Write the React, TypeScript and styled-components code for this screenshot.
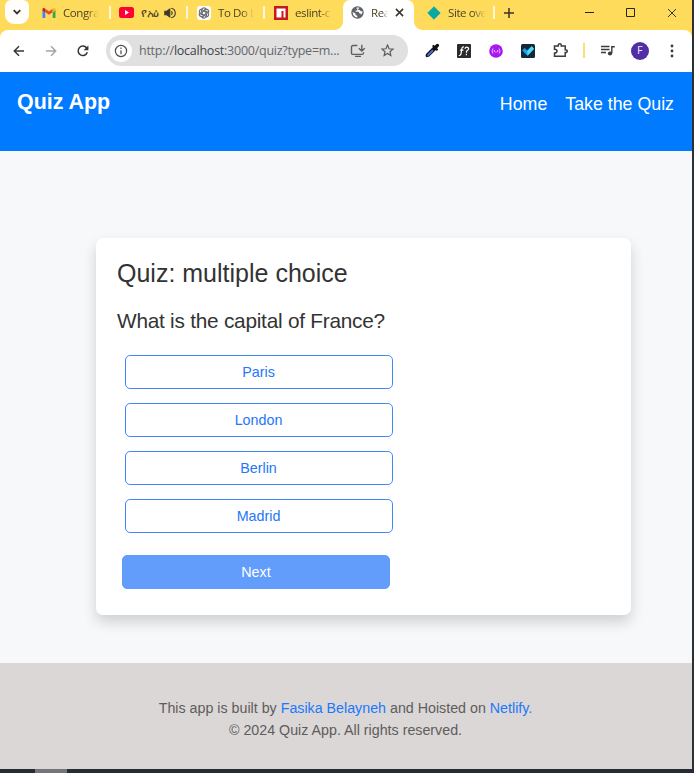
import React from "react";
import styled, { createGlobalStyle } from "styled-components";

const GlobalStyle = createGlobalStyle`
  * { box-sizing: border-box; }
  body { margin: 0; background: #303338; font-family: "Liberation Sans", Arial, sans-serif; }
  button { font-family: inherit; cursor: pointer; }
  a { text-decoration: none; }
  svg { display: block; flex: none; }
`;

const Desktop = styled.div`
  width: 694px;
  height: 773px;
  overflow: hidden;
  background: #2c3035;
`;
const Window = styled.div`
  width: 692px;
  height: 769px;
  display: flex;
  flex-direction: column;
  background: #ffdb5c;
`;
const TabStrip = styled.div`
  height: 30px;
  flex: none;
  display: flex;
  font-family: "Open Sans", "Noto Sans", sans-serif;
  font-size: 11.5px;
  letter-spacing: -0.4px;
  color: #4b4326;
`;
const TabSearch = styled.button`
  width: 24px;
  height: 24px;
  margin: 0 5px;
  padding: 0;
  border: 0;
  border-radius: 6px 6px 9px 9px;
  background: #fffefa;
  display: grid;
  place-items: center;
`;
const Tab = styled.div<{ $width: number; $active?: boolean; $divided?: boolean; $inset?: number }>`
  position: relative;
  width: ${(p) => p.$width}px;
  height: ${(p) => (p.$active ? 30 : 25)}px;
  padding: 0 0 ${(p) => (p.$active ? 5 : 0)}px ${(p) => p.$inset ?? 8}px;
  display: flex;
  align-items: center;
  gap: 7px;
  flex: none;
  ${(p) => p.$active && "background: #fff; border-radius: 7px 7px 0 0;"}
  ${(p) =>
    p.$divided &&
    `&::after { content: ""; position: absolute; right: 0; top: 6px; width: 2px; height: 13px; background: #fff6d8; }`}
`;
const Flare = styled.i<{ $side: "left" | "right" }>`
  position: absolute;
  bottom: 0;
  ${(p) => p.$side}: -8px;
  width: 8px;
  height: 8px;
  background: radial-gradient(circle at ${(p) => p.$side} top, transparent 7.5px, #fff 8px);
`;
const TabTitle = styled.span<{ $width: number; $faded?: boolean }>`
  width: ${(p) => p.$width}px;
  height: 18px;
  line-height: 18px;
  white-space: nowrap;
  ${(p) => p.$faded && "mask-image: linear-gradient(90deg, #000 65%, transparent);"}
`;
const WindowControls = styled.div`
  margin-left: auto;
  display: flex;
`;
const Slot = styled.button<{ $width: number; $height?: number }>`
  width: ${(p) => p.$width}px;
  height: ${(p) => p.$height ?? 41}px;
  flex: none;
  padding: 0;
  border: 0;
  background: none;
  display: grid;
  place-items: center;
`;
const Toolbar = styled.div`
  height: 41.5px;
  flex: none;
  display: flex;
  align-items: center;
  background: #fff;
  border-radius: 8px 8px 0 0;
  padding-left: 3px;
`;
const AddressBar = styled.div`
  width: 302px;
  height: 31px;
  margin: 0 8px 0 7px;
  flex: none;
  border-radius: 16px;
  background: #e0e0e0;
  display: flex;
  align-items: center;
  padding-left: 4px;
`;
const SiteInfo = styled.span`
  width: 22px;
  height: 22px;
  border-radius: 50%;
  background: #fff;
  display: grid;
  place-items: center;
`;
const Url = styled.span`
  width: 203px;
  margin-left: 7px;
  white-space: nowrap;
  font: 12.5px "Open Sans", "Noto Sans", sans-serif;
  letter-spacing: -0.25px;
  color: #66676a;
  b { font-weight: 400; color: #414347; }
`;
const ThemeMark = styled.span`
  width: 2px;
  height: 15px;
  margin: 0 7px;
  background: #ffdb70;
`;
const Avatar = styled.span`
  width: 18px;
  height: 18px;
  border-radius: 50%;
  background: #512da8;
  color: #eee4ff;
  font: 10px/18px Roboto, sans-serif;
  text-align: center;
`;
const SiteHeader = styled.header`
  height: 79.5px;
  flex: none;
  display: flex;
  justify-content: space-between;
  align-items: flex-start;
  padding: 17px 18px 0 17px;
  background: #007bff;
  color: #fff;
`;
const Brand = styled.div`
  font-size: 21.4px;
  line-height: 27px;
  font-weight: 700;
`;
const Nav = styled.nav`
  display: flex;
  gap: 18px;
  padding-top: 3px;
  font-size: 17.8px;
  line-height: 25px;
  a { color: #fff; }
`;
const Main = styled.main`
  height: 511.5px;
  flex: none;
  background: #f7f8fa;
  padding: 86.5px 0 0 96px;
`;
const Card = styled.section`
  width: 535px;
  height: 377px;
  padding: 19px 21px;
  border-radius: 7px;
  background: #fff;
  color: #333;
  box-shadow: 0 7px 14px rgba(0, 0, 0, 0.16);
`;
const Heading = styled.h2`
  margin: 0;
  font-size: 25px;
  line-height: 32px;
  font-weight: 400;
`;
const Question = styled.h3`
  margin: 18px 0 21px;
  font-size: 20.8px;
  letter-spacing: -0.24px;
  line-height: 27px;
  font-weight: 400;
`;
const Options = styled.div`
  display: grid;
  gap: 14.3px;
  padding-left: 7.5px;
`;
const Button = styled.button<{ $primary?: boolean }>`
  display: block;
  width: 268px;
  height: 34px;
  padding: 0;
  border: 1px solid ${(p) => (p.$primary ? "#629dfc" : "#4288fb")};
  border-radius: 5px;
  background: ${(p) => (p.$primary ? "#629dfc" : "#fff")};
  color: ${(p) => (p.$primary ? "#fff" : "#2477fa")};
  font-size: 14.3px;
  margin: ${(p) => (p.$primary ? "21.2px 0 0 5px" : "0")};
`;
const Footer = styled.footer`
  flex: 1;
  background: #dbd7d6;
  padding: 34px 1px 0 0;
  text-align: center;
  font-size: 14.25px;
  line-height: 22px;
  color: #5e5c5c;
  p { margin: 0; }
  a { color: #1c78fc; }
`;
const Taskbar = styled.div`
  height: 4px;
  padding-left: 35px;
  background: #262b34;
`;
const TaskbarItem = styled.div`
  width: 32px;
  height: 4px;
  background: #747779;
`;

const stroke = { fill: "none", stroke: "currentColor", strokeWidth: 1.5 } as const;

const Chevron = () => <svg width="10" height="8" {...stroke} color="#333" strokeWidth="1.8"><path d="m1.7 2.2 3.3 3.2 3.3-3.2" /></svg>;
const GmailIcon = () => (
  <svg width="14" height="12" viewBox="0 0 14 12">
    <path fill="#4285f4" d="M1 11h2.3V5L.5 3v7.2q0 .8.5.8" />
    <path fill="#34a853" d="M10.7 11H13q.5 0 .5-.8V3l-2.8 2z" />
    <path fill="#ea4335" d="M3.3 5V1.8L7 4.6l3.7-2.8V5L7 7.8z" />
    <path fill="#c5221f" d="M.5 2.4v1l2.8 2.1V1.8Q.7 0 .5 2.4" />
    <path fill="#fbbc04" d="M10.7 1.8v3.7l2.8-2.1v-1Q13.3 0 10.7 1.8" />
  </svg>
);
const YouTubeIcon = () => <svg width="15" height="11"><rect width="15" height="11" rx="2.5" fill="#ff0033" /><path fill="#fff" d="m6 3 4 2.5L6 8z" /></svg>;
const SpeakerIcon = () => <svg width="12" height="12" viewBox="0 0 12 12" fill="none" stroke="#3f3929" strokeWidth="1.1"><path fill="#3f3929" d="M.8 4.3h2L5.8 2v8L2.8 7.7h-2z" /><path d="M7.5 4.2q1.4 1.8 0 3.6M7.3 1.2c5.3 1.3 5.3 8.3 0 9.6" /></svg>;
const KnotIcon = () => (
  <svg width="14" height="14" viewBox="0 0 14 14">
    <rect width="14" height="14" rx="3" fill="#fff" />
    <g fill="none" stroke="#6d7073" strokeWidth="1.2">
      {[0, 60, 120, 180, 240, 300].map((a) => <path key={a} transform={`rotate(${a} 7 7)`} d="M5 7V3.8Q5.4 1.8 7.2 1.9q1 0 1.8 1L6.5 4.4" />)}
      <path d="m7 4.9 1.9 1.1v2.1L7 9.2 5.1 8.1V6z" />
    </g>
  </svg>
);
const NpmIcon = () => <svg width="14" height="14"><path fill="#cb171e" d="M0 0h14v14H0z" /><path fill="#fff" d="M2.5 2.5h9v9H9.5V5h-2v6.5h-5z" /></svg>;
const GlobeIcon = () => <svg width="13" height="13" viewBox="0 0 13 13"><circle cx="6.5" cy="6.5" r="6.2" fill="#606367" /><path fill="#fff" d="M1.6 6.1 4.5 7.4v1.5l1.8.9v1.7Q1.8 11 1.6 6.1m3-4.1q1.6-.8 3.8-.4L7.5 3H6.2v1.5H4.6v1.3h3l1 1.6h1.2V9q2-1.5 1.7-3.8H9.7L8.8 4.1H7.2V3" /></svg>;
const CloseIcon = ({ size = 9 }: { size?: number }) => <svg width={size} height={size} viewBox="0 0 10 10" fill="none" stroke="#38352d" strokeWidth={size > 9 ? 1 : 1.7}><path d="m1 1 8 8m0-8L1 9" /></svg>;
const DiamondIcon = () => <svg width="14" height="14"><path fill="#08a9a5" stroke="#08a9a5" strokeLinejoin="round" d="m7 .8 6.2 6.2L7 13.2.8 7z" /></svg>;
const PlusIcon = () => <svg width="10" height="10" {...stroke} color="#38352d"><path d="M5 0v10M0 5h10" /></svg>;
const MinIcon = () => <svg width="10" height="10" fill="none" stroke="#272418"><path d="M0 4.5h9" /></svg>;
const MaxIcon = () => <svg width="10" height="10" fill="none" stroke="#272418"><path d="M.5.5h8v8h-8z" /></svg>;
const ArrowIcon = ({ forward = false }) => <svg width="12" height="12" {...stroke} color={forward ? "#a4a5a6" : "#36383a"}><path d={forward ? "M1 6h9M6 1.3 10.7 6 6 10.7" : "M11 6H2m4-4.7L1.3 6 6 10.7"} /></svg>;
const ReloadIcon = () => <svg width="12" height="12" {...stroke} color="#333537"><path d="M10.3 7.3a4.7 4.7 0 1 1-.7-4.3l1 1.2" /><path fill="currentColor" stroke="none" d="M11.4.4v4.9H6.5l2-2z" /></svg>;
const InfoIcon = () => <svg width="14" height="14" fill="none" stroke="#4b4d50" strokeWidth="1.2"><circle cx="7" cy="7" r="5.6" /><path d="M7 6.2v4M7 3.6v1.3" /></svg>;
const InstallIcon = () => <svg width="16" height="14" fill="none" stroke="#5d6063" strokeWidth="1.4"><path d="M7.3 1.5H3q-1.5 0-1.5 1.5v6.2q0 1.2 1.5 1.2h9q1.5 0 1.5-1.4V8.3M5 12.4h6M11.8.8v6M8.8 4.2l3 2.8 3-2.8" /></svg>;
const StarIcon = () => <svg width="13" height="13" viewBox="0 0 14 14" fill="none" stroke="#595c5e" strokeWidth="1.3"><path d="m7 1.2 1.7 3.9 4.2.4-3.2 2.8.9 4.2L7 10.3l-3.6 2.2.9-4.2L1.1 5.5l4.2-.4z" /></svg>;
const DropperIcon = () => <svg width="15" height="15"><path fill="#101116" d="m1 11 7-7-1-1 1.4-1.3 1.2 1 2-1.8q1-.7 2 .4t.3 2l-1.8 2 1.1 1.2-1.4 1.4-1-1-6.6 6.6-2.7.8L.5 13z" /><path fill="#4d72e8" d="m2.5 11.4 4.8-4.8 1.3 1.3-4.8 4.8-1.5.4z" /></svg>;
const FontIcon = () => <svg width="14" height="14"><rect width="14" height="14" rx="1" fill="#292a2d" /><path d="M1.8 11.4q2 .5 2.3-2l.7-4.5Q5.2 2.5 7 3M3 6.2h3.5m1.4-1.4q.7-2 2.5-1.5 2 .6.8 2.3L9.5 7.2v1.6m-.1 1v1.4" fill="none" stroke="#fff" strokeWidth="1.2" /></svg>;
const PurpleIcon = () => <svg width="14" height="14"><circle cx="7" cy="7" r="6.8" fill="#a719f4" /><path d="M4 4.5Q2 7 4 9.6M10 4.5q2 2.5 0 5.1M5.3 6v2M8.7 6v2M6.3 8h1.4" fill="none" stroke="#e9b7ff" /></svg>;
const CheckIcon = () => <svg width="14" height="14"><rect width="14" height="14" rx="1.5" fill="#142638" /><path d="m1.2 6.5 2.2-2.4 3 2.5 4.3-4.3 2.4 2.4-6.6 7z" fill="#10a7ef" /><path d="m6.4 6.8 4.3-4.5 2.4 2.4-6.6 7z" fill="#4bdcfb" /></svg>;
const PuzzleIcon = () => <svg width="15" height="15" fill="none" stroke="#393b3d" strokeWidth="1.5"><path d="M1.5 3h3.8Q5 .8 6.8.8T8.3 3h3.9v3.8q2 0 2 1.4t-2 1.4v3.6H1.5v-3.1q2.5-.2 2.5-1.9T1.5 6.3z" /></svg>;
const MusicIcon = () => <svg width="14" height="12" fill="none" stroke="#393b3d" strokeWidth="1.4"><path d="M0 1.5h8.5M0 4.5h8.5M0 7.5h5M10.8 1.7h3M10.8 1v7.3" /><circle cx="9" cy="8.5" r="2.1" fill="#393b3d" stroke="none" /></svg>;
const DotsIcon = () => <svg width="4" height="14" fill="#383a3d"><circle cx="2" cy="2" r="1.4" /><circle cx="2" cy="7" r="1.4" /><circle cx="2" cy="12" r="1.4" /></svg>;

function Browser() {
  return (
    <>
      <TabStrip>
        <TabSearch aria-label="Search tabs"><Chevron /></TabSearch>
        <Tab $width={77} $divided><GmailIcon /><TabTitle $width={36} $faded>Congra</TabTitle></Tab>
        <Tab $width={77} $divided><YouTubeIcon /><TabTitle $width={16}>የአዕ</TabTitle><SpeakerIcon /></Tab>
        <Tab $width={77} $divided $inset={9}><KnotIcon /><TabTitle $width={36} $faded>To Do L</TabTitle></Tab>
        <Tab $width={78} $inset={9}><NpmIcon /><TabTitle $width={37} $faded>eslint-c</TabTitle></Tab>
        <Tab $width={71} $active>
          <Flare $side="left" /><GlobeIcon />
          <TabTitle $width={17} $faded>Rea</TabTitle><CloseIcon />
          <Flare $side="right" />
        </Tab>
        <Tab $width={81} $divided $inset={13}><DiamondIcon /><TabTitle $width={38} $faded>Site ove</TabTitle></Tab>
        <Slot $width={27} $height={25} aria-label="New tab"><PlusIcon /></Slot>
        <WindowControls>
          <Slot $width={41} $height={25} aria-label="Minimize"><MinIcon /></Slot>
          <Slot $width={41} $height={25} aria-label="Maximize"><MaxIcon /></Slot>
          <Slot $width={41} $height={25} aria-label="Close"><CloseIcon size={10} /></Slot>
        </WindowControls>
      </TabStrip>
      <Toolbar>
        <Slot $width={32}><ArrowIcon /></Slot><Slot $width={32}><ArrowIcon forward /></Slot><Slot $width={32}><ReloadIcon /></Slot>
        <AddressBar>
          <SiteInfo><InfoIcon /></SiteInfo>
          <Url>http://<b>localhost</b>:3000/quiz?type=m...</Url>
          <Slot $width={32} $height={31}><InstallIcon /></Slot><Slot $width={26} $height={31}><StarIcon /></Slot>
        </AddressBar>
        <Slot $width={32}><DropperIcon /></Slot><Slot $width={32}><FontIcon /></Slot><Slot $width={32}><PurpleIcon /></Slot>
        <Slot $width={32}><CheckIcon /></Slot><Slot $width={32}><PuzzleIcon /></Slot>
        <ThemeMark />
        <Slot $width={32}><MusicIcon /></Slot><Slot $width={32}><Avatar>F</Avatar></Slot><Slot $width={32}><DotsIcon /></Slot>
      </Toolbar>
    </>
  );
}

export default function App() {
  return (
    <Desktop>
      <GlobalStyle />
      <Window>
        <Browser />
        <SiteHeader>
          <Brand>Quiz App</Brand>
          <Nav><a href="#home">Home</a><a href="#quiz">Take the Quiz</a></Nav>
        </SiteHeader>
        <Main>
          <Card>
            <Heading>Quiz: multiple choice</Heading>
            <Question>What is the capital of France?</Question>
            <Options>{["Paris", "London", "Berlin", "Madrid"].map((city) => <Button key={city}>{city}</Button>)}</Options>
            <Button $primary>Next</Button>
          </Card>
        </Main>
        <Footer>
          <p>This app is built by <a href="#author">Fasika Belayneh</a> and Hoisted on <a href="#host">Netlify.</a></p>
          <p>© 2024 Quiz App. All rights reserved.</p>
        </Footer>
      </Window>
      <Taskbar><TaskbarItem /></Taskbar>
    </Desktop>
  );
}
